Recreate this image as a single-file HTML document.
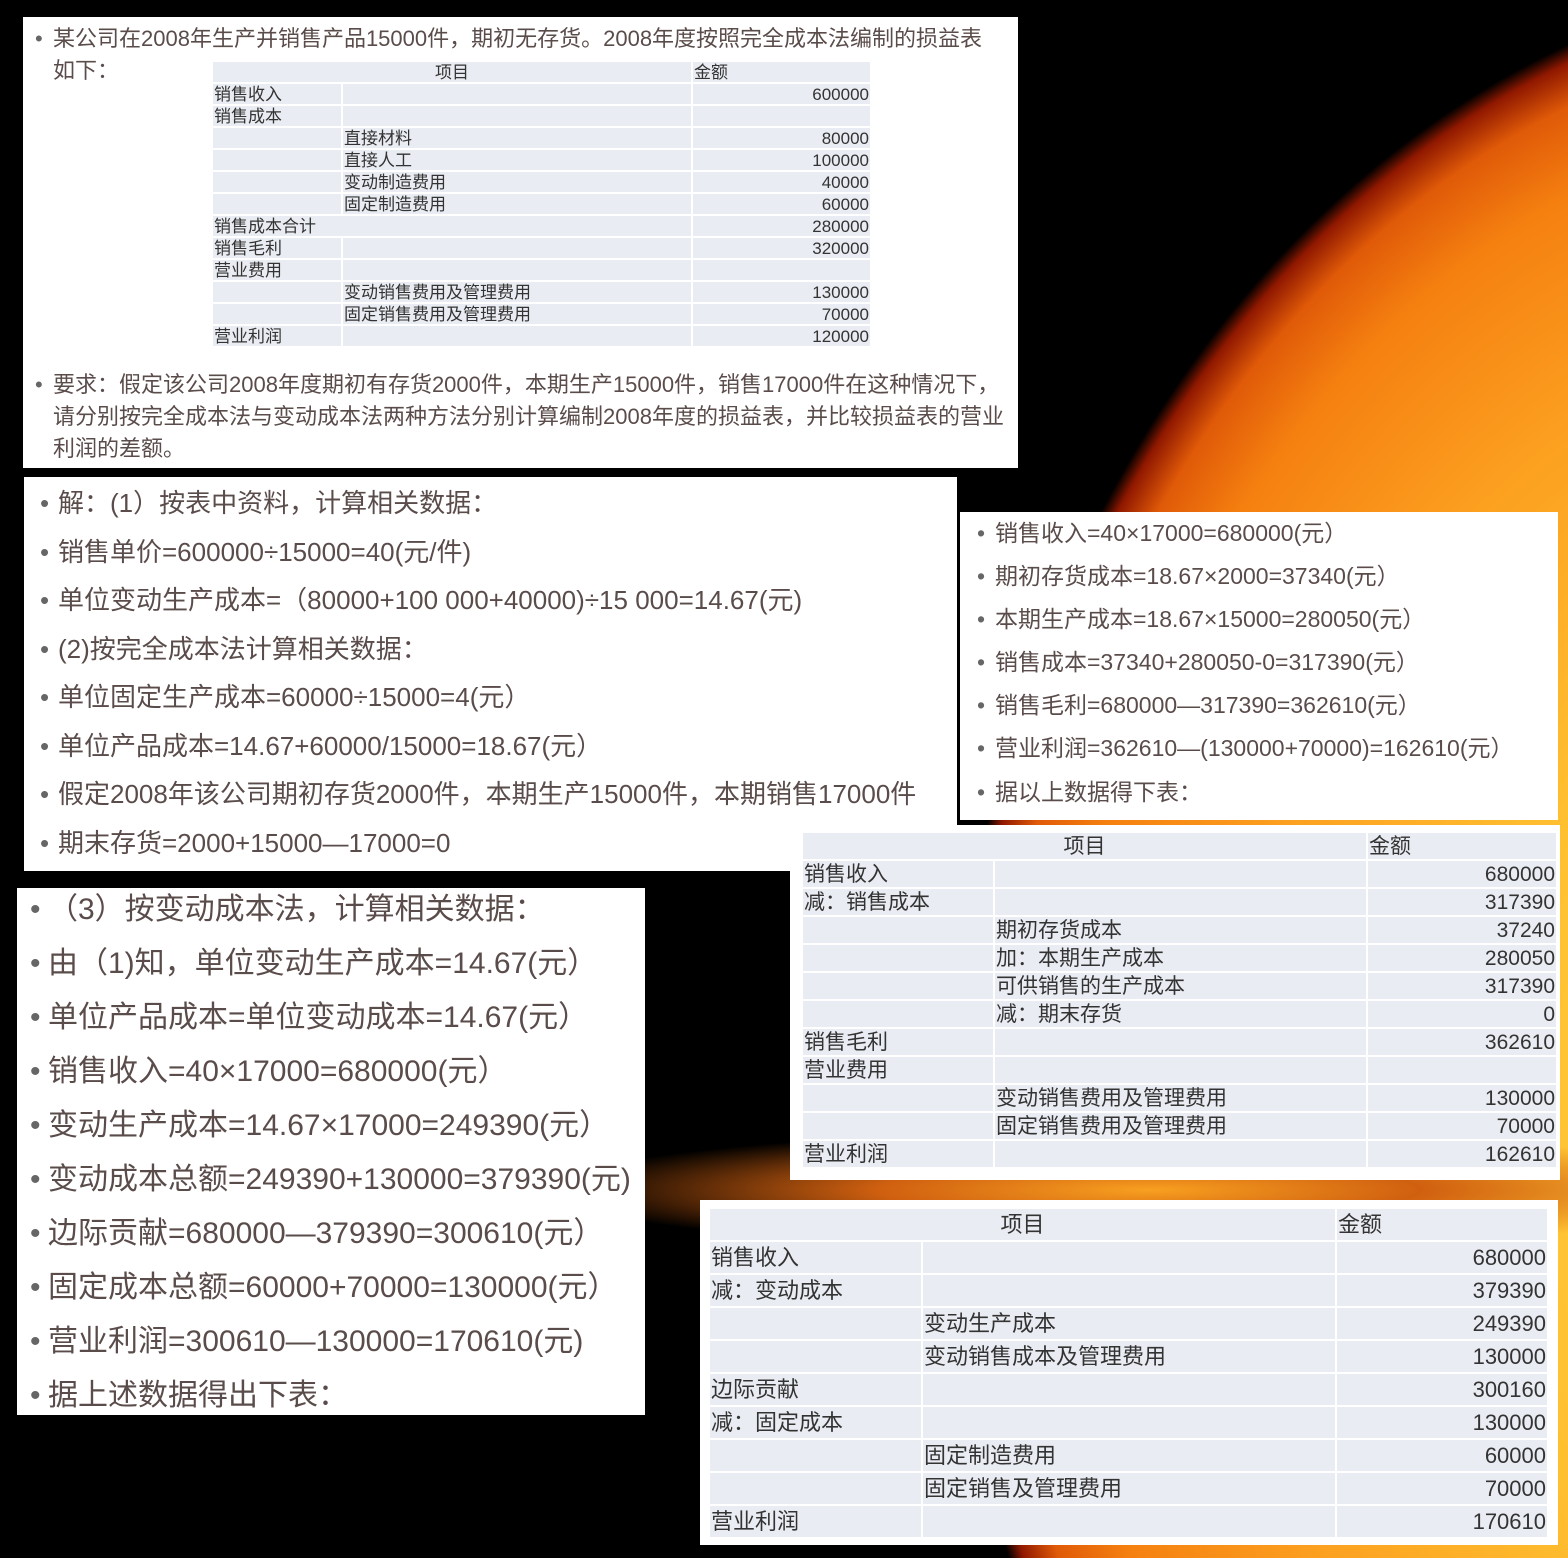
<!DOCTYPE html>
<html><head><meta charset="utf-8"><style>
*{margin:0;padding:0;box-sizing:border-box}
html,body{width:1568px;height:1558px;overflow:hidden;background:#000}
body{position:relative;font-family:"Liberation Sans","Noto Sans CJK SC",sans-serif;color:#5a4c4a}
.wrap{position:absolute;left:0;top:0;width:1568px;height:1558px;overflow:hidden;
background:
radial-gradient(ellipse 600px 60px at 1150px 1190px,#f8a020 0%,#d06010 45%,rgba(0,0,0,0) 100%),
radial-gradient(ellipse 950px 1180px at 1900px 1150px,#ffd040 0%,#ffc030 45%,#fca020 70%,#f58010 88%,#e05a08 95%,#901800 98.5%,rgba(0,0,0,0) 100%),
#000}
.p{position:absolute;background:#fff}
.l{position:absolute;white-space:nowrap}
.l b{font-weight:normal;position:absolute;left:-18px;color:#666}
table{position:absolute;border-collapse:separate;border-spacing:2px;color:#333}
td{background:#e9ecf2;padding:0 1px;white-space:nowrap;line-height:1}
td.r{text-align:right}
</style></head><body><div class="wrap">

<div class="p" style="left:23px;top:17px;width:995px;height:451px">
<div style="position:absolute;left:30px;top:6px;font-size:22px;line-height:32px;">
<div class="l" style="top:0"><b>•</b>某公司在2008年生产并销售产品15000件，期初无存货。2008年度按照完全成本法编制的损益表</div>
<div class="l" style="top:32px">如下：</div>
<div class="l" style="top:346px"><b>•</b>要求：假定该公司2008年度期初有存货2000件，本期生产15000件，销售17000件在这种情况下，</div>
<div class="l" style="top:378px">请分别按完全成本法与变动成本法两种方法分别计算编制2008年度的损益表，并比较损益表的营业</div>
<div class="l" style="top:410px">利润的差额。</div>
</div>
<table style="left:188px;top:43px;width:661px;font-size:17px">
<colgroup><col style="width:128px"><col style="width:348px"><col></colgroup>
<tr style="height:20px"><td colspan="2" style="text-align:center">项目</td><td>金额</td></tr>
<tr style="height:20px"><td>销售收入</td><td></td><td class="r">600000</td></tr>
<tr style="height:20px"><td>销售成本</td><td></td><td></td></tr>
<tr style="height:20px"><td></td><td>直接材料</td><td class="r">80000</td></tr>
<tr style="height:20px"><td></td><td>直接人工</td><td class="r">100000</td></tr>
<tr style="height:20px"><td></td><td>变动制造费用</td><td class="r">40000</td></tr>
<tr style="height:20px"><td></td><td>固定制造费用</td><td class="r">60000</td></tr>
<tr style="height:20px"><td colspan="2">销售成本合计</td><td class="r">280000</td></tr>
<tr style="height:20px"><td>销售毛利</td><td></td><td class="r">320000</td></tr>
<tr style="height:20px"><td>营业费用</td><td></td><td></td></tr>
<tr style="height:20px"><td></td><td>变动销售费用及管理费用</td><td class="r">130000</td></tr>
<tr style="height:20px"><td></td><td>固定销售费用及管理费用</td><td class="r">70000</td></tr>
<tr style="height:20px"><td>营业利润</td><td></td><td class="r">120000</td></tr>
</table>
</div>

<div class="p" style="left:24px;top:477px;width:933px;height:394px">
<div style="position:absolute;left:34px;top:8px;font-size:26px;line-height:36px">
<div class="l" style="top:0"><b>•</b>解：(1）按表中资料，计算相关数据：</div>
<div class="l" style="top:48.5px"><b>•</b>销售单价=600000÷15000=40(元/件)</div>
<div class="l" style="top:97px"><b>•</b>单位变动生产成本=（80000+100 000+40000)÷15 000=14.67(元)</div>
<div class="l" style="top:145.5px"><b>•</b>(2)按完全成本法计算相关数据：</div>
<div class="l" style="top:194px"><b>•</b>单位固定生产成本=60000÷15000=4(元）</div>
<div class="l" style="top:242.5px"><b>•</b>单位产品成本=14.67+60000/15000=18.67(元）</div>
<div class="l" style="top:291px"><b>•</b>假定2008年该公司期初存货2000件，本期生产15000件，本期销售17000件</div>
<div class="l" style="top:339.5px"><b>•</b>期末存货=2000+15000—17000=0</div>
</div></div>

<div class="p" style="left:960px;top:512px;width:598px;height:308px">
<div style="position:absolute;left:35px;top:5px;font-size:23px;line-height:32px">
<div class="l" style="top:0"><b>•</b>销售收入=40×17000=680000(元）</div>
<div class="l" style="top:43px"><b>•</b>期初存货成本=18.67×2000=37340(元）</div>
<div class="l" style="top:86px"><b>•</b>本期生产成本=18.67×15000=280050(元）</div>
<div class="l" style="top:129px"><b>•</b>销售成本=37340+280050-0=317390(元）</div>
<div class="l" style="top:172px"><b>•</b>销售毛利=680000—317390=362610(元）</div>
<div class="l" style="top:215px"><b>•</b>营业利润=362610—(130000+70000)=162610(元）</div>
<div class="l" style="top:259px"><b>•</b>据以上数据得下表：</div>
</div></div>

<div class="p" style="left:790px;top:825px;width:770px;height:355px">
<table style="left:11px;top:6px;width:757px;font-size:21px">
<colgroup><col style="width:190px"><col style="width:371px"><col></colgroup>
<tr style="height:26px"><td colspan="2" style="text-align:center">项目</td><td>金额</td></tr>
<tr style="height:26px"><td>销售收入</td><td></td><td class="r">680000</td></tr>
<tr style="height:26px"><td>减：销售成本</td><td></td><td class="r">317390</td></tr>
<tr style="height:26px"><td></td><td>期初存货成本</td><td class="r">37240</td></tr>
<tr style="height:26px"><td></td><td>加：本期生产成本</td><td class="r">280050</td></tr>
<tr style="height:26px"><td></td><td>可供销售的生产成本</td><td class="r">317390</td></tr>
<tr style="height:26px"><td></td><td>减：期末存货</td><td class="r">0</td></tr>
<tr style="height:26px"><td>销售毛利</td><td></td><td class="r">362610</td></tr>
<tr style="height:26px"><td>营业费用</td><td></td><td></td></tr>
<tr style="height:26px"><td></td><td>变动销售费用及管理费用</td><td class="r">130000</td></tr>
<tr style="height:26px"><td></td><td>固定销售费用及管理费用</td><td class="r">70000</td></tr>
<tr style="height:26px"><td>营业利润</td><td></td><td class="r">162610</td></tr>
</table></div>

<div class="p" style="left:17px;top:888px;width:628px;height:527px">
<div style="position:absolute;left:31px;top:3px;font-size:30px;line-height:38px">
<div class="l" style="top:0"><b>•</b>（3）按变动成本法，计算相关数据：</div>
<div class="l" style="top:54px"><b>•</b>由（1)知，单位变动生产成本=14.67(元）</div>
<div class="l" style="top:108px"><b>•</b>单位产品成本=单位变动成本=14.67(元）</div>
<div class="l" style="top:162px"><b>•</b>销售收入=40×17000=680000(元）</div>
<div class="l" style="top:216px"><b>•</b>变动生产成本=14.67×17000=249390(元）</div>
<div class="l" style="top:270px"><b>•</b>变动成本总额=249390+130000=379390(元)</div>
<div class="l" style="top:324px"><b>•</b>边际贡献=680000—379390=300610(元）</div>
<div class="l" style="top:378px"><b>•</b>固定成本总额=60000+70000=130000(元）</div>
<div class="l" style="top:432px"><b>•</b>营业利润=300610—130000=170610(元)</div>
<div class="l" style="top:486px"><b>•</b>据上述数据得出下表：</div>
</div></div>

<div class="p" style="left:700px;top:1200px;width:858px;height:345px">
<table style="left:8px;top:7px;width:841px;font-size:22px">
<colgroup><col style="width:211px"><col style="width:412px"><col></colgroup>
<tr style="height:31px"><td colspan="2" style="text-align:center">项目</td><td>金额</td></tr>
<tr style="height:31px"><td>销售收入</td><td></td><td class="r">680000</td></tr>
<tr style="height:31px"><td>减：变动成本</td><td></td><td class="r">379390</td></tr>
<tr style="height:31px"><td></td><td>变动生产成本</td><td class="r">249390</td></tr>
<tr style="height:31px"><td></td><td>变动销售成本及管理费用</td><td class="r">130000</td></tr>
<tr style="height:31px"><td>边际贡献</td><td></td><td class="r">300160</td></tr>
<tr style="height:31px"><td>减：固定成本</td><td></td><td class="r">130000</td></tr>
<tr style="height:31px"><td></td><td>固定制造费用</td><td class="r">60000</td></tr>
<tr style="height:31px"><td></td><td>固定销售及管理费用</td><td class="r">70000</td></tr>
<tr style="height:31px"><td>营业利润</td><td></td><td class="r">170610</td></tr>
</table></div>
</div></body></html>
